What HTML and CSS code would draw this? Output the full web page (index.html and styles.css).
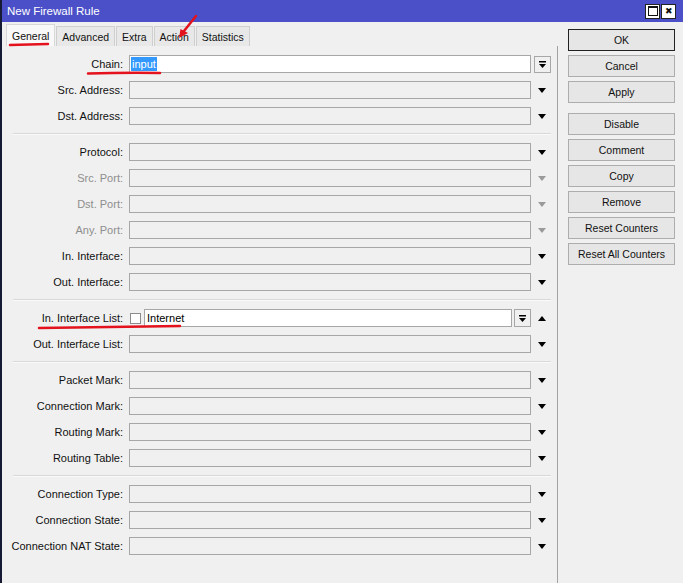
FILE: index.html
```html
<!DOCTYPE html>
<html>
    <head>
        <meta name="viewport" content="width=device-width, initial-scale=1.0">
        <link rel="stylesheet" href="styles.css">
    </head>
    <body>
        <div class="window">
            <div class="titlebar">
                <span class="title">New Firewall Rule</span>
                <div class="wbtns">
                    <span class="wbtn"><span class="sq"></span></span>
                    <span class="wbtn x">&#x2716;</span>
                </div>
            </div>
            <div class="body">
                <div class="main">
                    <div class="tabs">
                        <span class="tab on">General</span>
                        <span class="tab">Advanced</span>
                        <span class="tab">Extra</span>
                        <span class="tab">Action</span>
                        <span class="tab">Statistics</span>
                    </div>
                    <div class="form">
                        <div class="row">
                            <span class="lbl">Chain:</span>
                            <div class="field white"><span class="sel">input</span></div>
                            <span class="tail"><span class="dd"><svg width="7" height="7" viewBox="0 0 7 7"><rect x="0" y="0" width="7" height="1.5" fill="#000"/><polygon points="0,3 7,3 3.5,7" fill="#000"/></svg></span></span>
                        </div>
                        <div class="row">
                            <span class="lbl">Src. Address:</span>
                            <div class="field"></div>
                            <span class="tail"><span class="down"></span></span>
                        </div>
                        <div class="row">
                            <span class="lbl">Dst. Address:</span>
                            <div class="field"></div>
                            <span class="tail"><span class="down"></span></span>
                        </div>
                        <div class="sep"></div>
                        <div class="row">
                            <span class="lbl">Protocol:</span>
                            <div class="field"></div>
                            <span class="tail"><span class="down"></span></span>
                        </div>
                        <div class="row off">
                            <span class="lbl">Src. Port:</span>
                            <div class="field"></div>
                            <span class="tail"><span class="down"></span></span>
                        </div>
                        <div class="row off">
                            <span class="lbl">Dst. Port:</span>
                            <div class="field"></div>
                            <span class="tail"><span class="down"></span></span>
                        </div>
                        <div class="row off">
                            <span class="lbl">Any. Port:</span>
                            <div class="field"></div>
                            <span class="tail"><span class="down"></span></span>
                        </div>
                        <div class="row">
                            <span class="lbl">In. Interface:</span>
                            <div class="field"></div>
                            <span class="tail"><span class="down"></span></span>
                        </div>
                        <div class="row">
                            <span class="lbl">Out. Interface:</span>
                            <div class="field"></div>
                            <span class="tail"><span class="down"></span></span>
                        </div>
                        <div class="sep"></div>
                        <div class="row">
                            <span class="lbl">In. Interface List:</span>
                            <span class="check"></span>
                            <div class="field white short">Internet</div>
                            <span class="dd inline"><svg width="7" height="7" viewBox="0 0 7 7"><rect x="0" y="0" width="7" height="1.5" fill="#000"/><polygon points="0,3 7,3 3.5,7" fill="#000"/></svg></span>
                            <span class="tail"><span class="up"></span></span>
                        </div>
                        <div class="row">
                            <span class="lbl">Out. Interface List:</span>
                            <div class="field"></div>
                            <span class="tail"><span class="down"></span></span>
                        </div>
                        <div class="sep"></div>
                        <div class="row">
                            <span class="lbl">Packet Mark:</span>
                            <div class="field"></div>
                            <span class="tail"><span class="down"></span></span>
                        </div>
                        <div class="row">
                            <span class="lbl">Connection Mark:</span>
                            <div class="field"></div>
                            <span class="tail"><span class="down"></span></span>
                        </div>
                        <div class="row">
                            <span class="lbl">Routing Mark:</span>
                            <div class="field"></div>
                            <span class="tail"><span class="down"></span></span>
                        </div>
                        <div class="row">
                            <span class="lbl">Routing Table:</span>
                            <div class="field"></div>
                            <span class="tail"><span class="down"></span></span>
                        </div>
                        <div class="sep"></div>
                        <div class="row">
                            <span class="lbl">Connection Type:</span>
                            <div class="field"></div>
                            <span class="tail"><span class="down"></span></span>
                        </div>
                        <div class="row">
                            <span class="lbl">Connection State:</span>
                            <div class="field"></div>
                            <span class="tail"><span class="down"></span></span>
                        </div>
                        <div class="row">
                            <span class="lbl">Connection NAT State:</span>
                            <div class="field"></div>
                            <span class="tail"><span class="down"></span></span>
                        </div>
                    </div>
                </div>
                <div class="side">
                    <button class="btn ok">OK</button>
                    <button class="btn">Cancel</button>
                    <button class="btn gap">Apply</button>
                    <button class="btn">Disable</button>
                    <button class="btn">Comment</button>
                    <button class="btn">Copy</button>
                    <button class="btn">Remove</button>
                    <button class="btn">Reset Counters</button>
                    <button class="btn">Reset All Counters</button>
                </div>
            </div>

            <!-- red marks drawn on top of the screenshot -->
            <svg class="marks" width="683" height="583" viewBox="0 0 683 583">
                <g stroke="#e3121c" stroke-width="2.5" fill="none" stroke-linecap="round">
                    <path d="M10 45 Q30 44.5 48 44"/>
                    <path d="M88 73.5 Q125 72.5 160 73"/>
                    <path d="M39 328 Q110 327 180 326"/>
                    <path d="M196 16 L184 31"/>
                </g>
                <polygon points="179,38 180.5,29 188,33" fill="#e3121c"/>
            </svg>
        </div>
    </body>
</html>
```

FILE: styles.css
```css
body{
    margin: 0;
    font-family: "Liberation Sans", Arial, sans-serif;
    font-size: 11px;
    background: #f0f0f0;
}
        .window{
            position: relative;
            width: 683px;
            height: 583px;
            box-sizing: border-box;
            border-left: 2px solid #161a35;
            background: #f0f0f0;
            overflow: hidden;
        }
        .titlebar{
            height: 22px;
            background: #4b50c8;
            display: flex;
            align-items: center;
            justify-content: space-between;
            padding: 0 7px 0 5px;
        }
        .title{
            color: #fff;
            font-size: 11.5px;
        }
        .wbtns{
            display: flex;
            gap: 1px;
        }
        .wbtn{
            width: 13px;
            height: 13px;
            background: #fff;
            border: 1px solid #222;
            display: flex;
            align-items: center;
            justify-content: center;
            font-size: 9px;
            line-height: 1;
            color: #111;
        }
        .sq{
            width: 8px;
            height: 7px;
            border: 1px solid #111;
            border-top-width: 2px;
        }

        .body{
            display: flex;
        }
        .main{
            width: 556px;
        }
        .tabs{
            height: 24px;
            box-sizing: border-box;
            padding: 3px 0 0 4px;
            display: flex;
            align-items: flex-end;
        }
        .tab{
            height: 20px;
            box-sizing: border-box;
            padding: 0 5px;
            margin-left: 1px;
            border: 1px solid #cfcfcf;
            border-bottom: none;
            background: #e8e8e8;
            display: flex;
            align-items: center;
            font-size: 10.5px;
            color: #111;
        }
        .tab.on{
            height: 22px;
            background: #f8f8f8;
            margin-left: 0;
            padding: 0 5px;
            border-color: #d8d8d8;
        }

        .form{
            height: 537px;
            padding-top: 9px;
            box-sizing: border-box;
            border-right: 1px solid #a3a3a3;
        }
        .row{
            display: flex;
            align-items: center;
            height: 18px;
            margin-bottom: 8px;
        }
        .lbl{
            width: 127px;
            box-sizing: border-box;
            padding-right: 6px;
            text-align: right;
            white-space: nowrap;
            color: #111;
        }
        .off .lbl{
            color: #8e8e8e;
        }
        .field{
            width: 402px;
            height: 18px;
            box-sizing: border-box;
            border: 1px solid #a7a7a7;
            background: #f0f0f0;
            display: flex;
            align-items: center;
            padding-left: 1px;
            color: #000;
        }
        .field.white{
            background: #fff;
        }
        .field.short{
            width: 368px;
            margin-left: 3px;
            padding-left: 2px;
        }
        .sel{
            background: #3399ff;
            color: #fff;
            padding: 0 1px;
            line-height: 14px;
        }
        .check{
            width: 11px;
            height: 11px;
            margin-left: 1px;
            box-sizing: border-box;
            border: 1px solid #8c8c8c;
            background: #fff;
        }
        .tail{
            width: 22px;
            display: flex;
            justify-content: center;
            align-items: center;
        }
        .dd{
            width: 17px;
            height: 17px;
            box-sizing: border-box;
            border: 1px solid #a7a7a7;
            background: #f0f0f0;
            display: flex;
            align-items: center;
            justify-content: center;
        }
        .dd.inline{
            margin-left: 2px;
            height: 18px;
        }
        .down{
            width: 0;
            height: 0;
            border-left: 4px solid transparent;
            border-right: 4px solid transparent;
            border-top: 5px solid #000;
        }
        .up{
            width: 0;
            height: 0;
            border-left: 4px solid transparent;
            border-right: 4px solid transparent;
            border-bottom: 5px solid #000;
        }
        .off .down{
            border-top-color: #9a9a9a;
        }
        .sep{
            height: 1px;
            margin: 0 6px 8px 11px;
            background: #d9d9d9;
            border-bottom: 1px solid #fafafa;
        }

        .side{
            padding: 7px 0 0 10px;
            display: flex;
            flex-direction: column;
        }
        .btn{
            width: 107px;
            height: 22px;
            margin-bottom: 4px;
            border: 1px solid #adadad;
            background: #e6e6e6;
            font-family: "Liberation Sans", Arial, sans-serif;
            font-size: 10.5px;
            color: #111;
            padding: 0;
        }
        .btn.ok{
            border-color: #222;
        }
        .btn.gap{
            margin-bottom: 10px;
        }

        .marks{
            position: absolute;
            top: 0;
            left: -2px;
            pointer-events: none;
        }
```
